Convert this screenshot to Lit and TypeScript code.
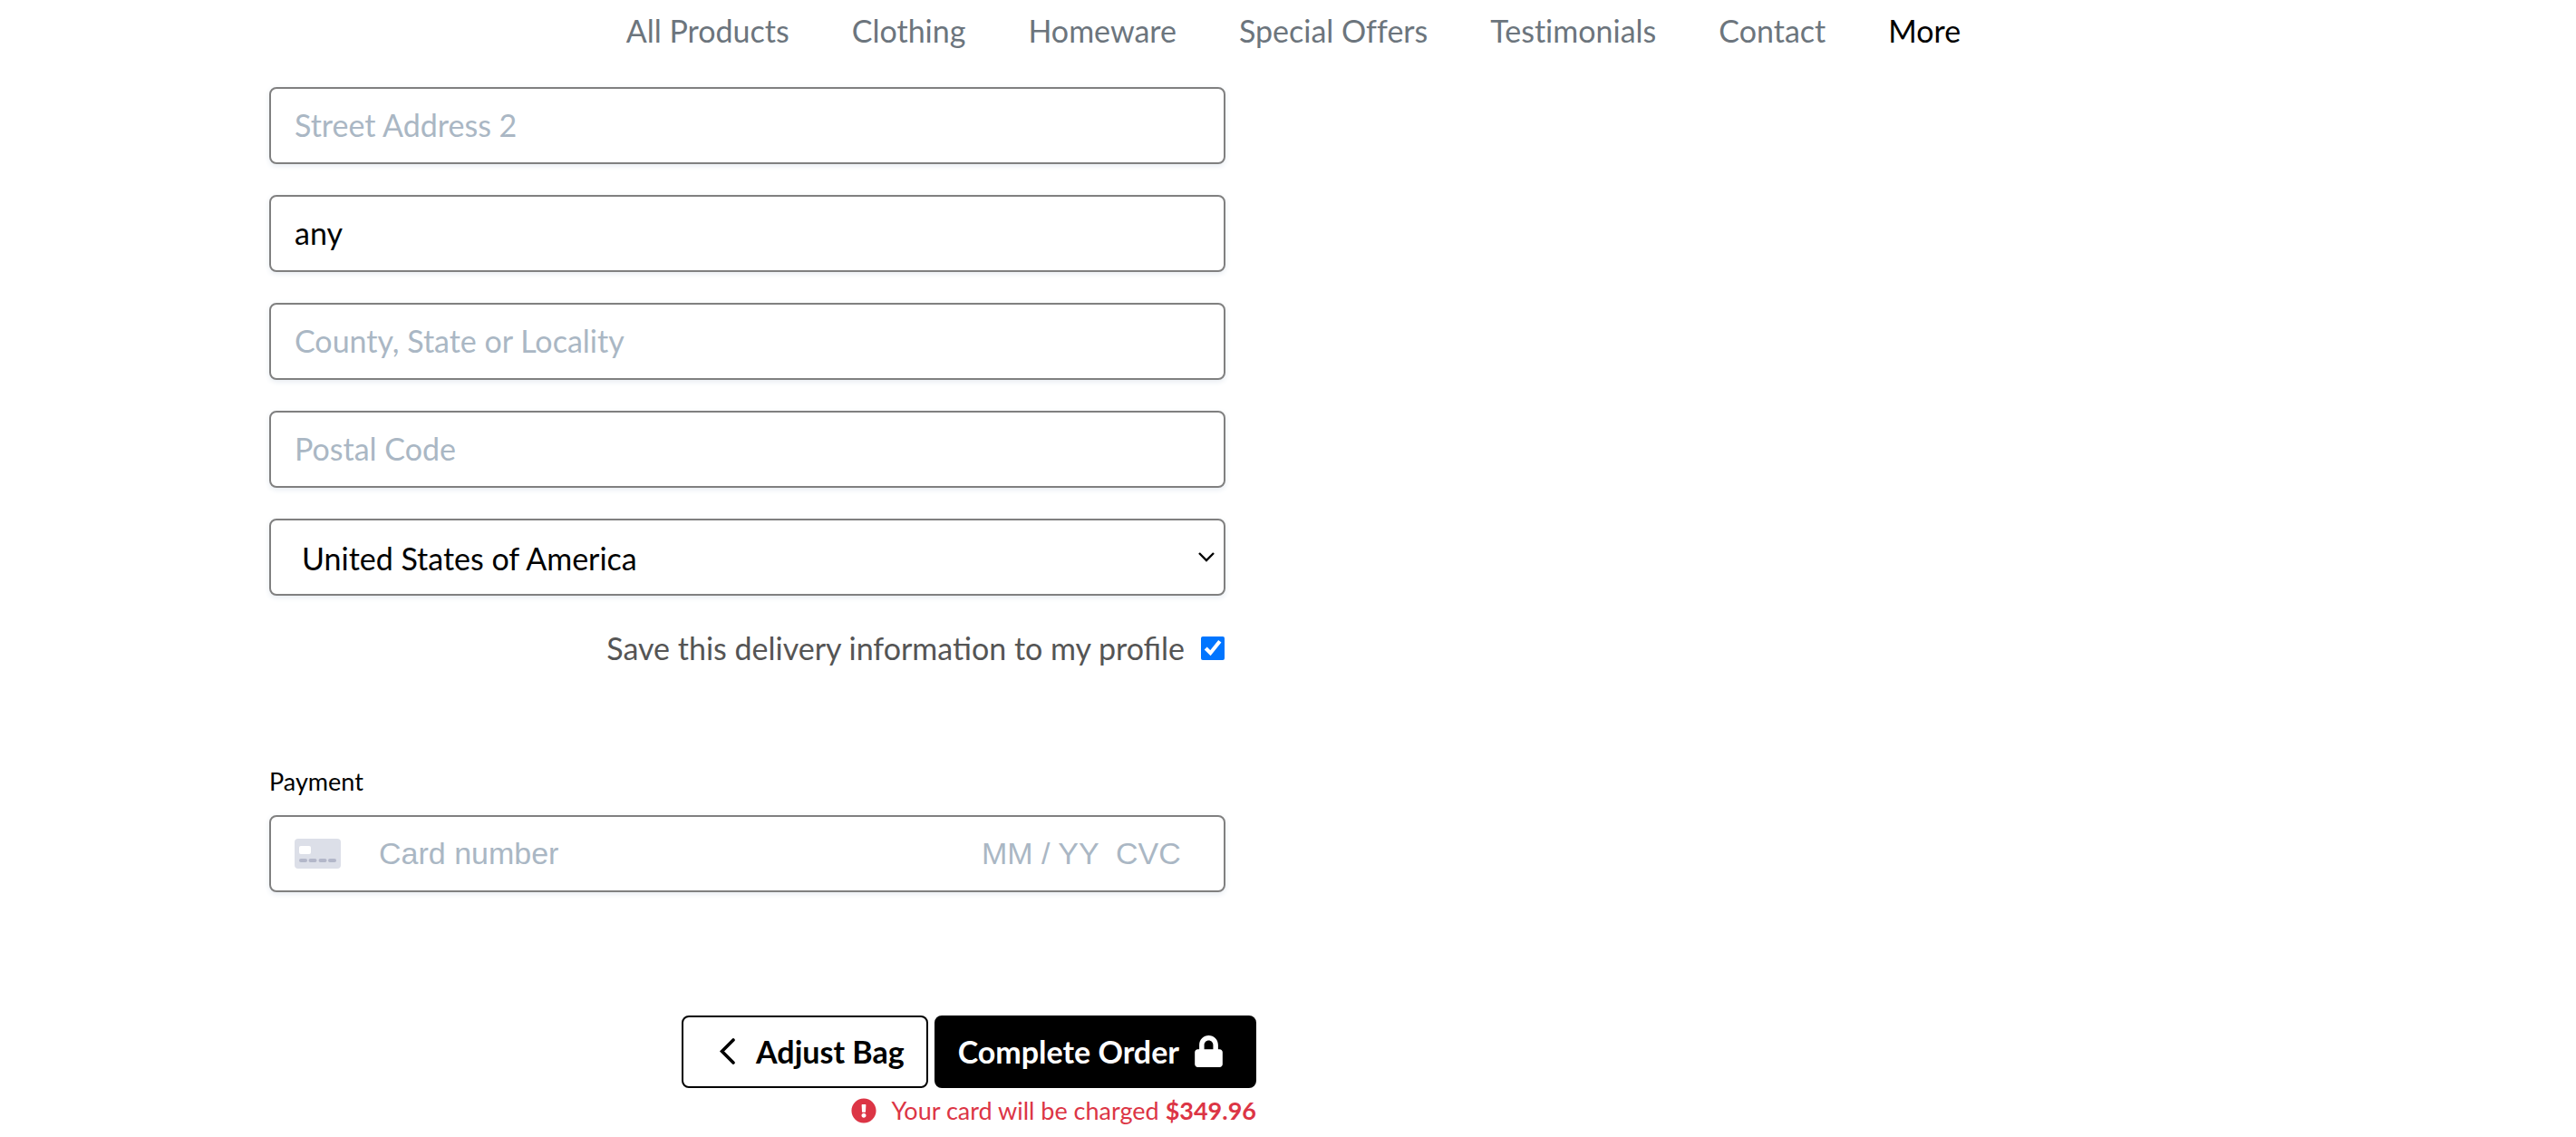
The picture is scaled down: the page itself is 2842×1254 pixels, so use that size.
import { LitElement, html, css } from "lit";
import { customElement } from "lit/decorators.js";

const NAV_LINKS = [
  "All Products",
  "Clothing",
  "Homeware",
  "Special Offers",
  "Testimonials",
  "Contact",
];

@customElement("site-nav")
class SiteNav extends LitElement {
  static styles = css`
    :host {
      display: block;
    }
    .links {
      display: flex;
      justify-content: center;
      flex-wrap: wrap;
      gap: 0 69px;
      padding: 13px 0 15px 12px;
      line-height: 42px;
      font-variant-ligatures: no-common-ligatures;
    }
    .link {
      color: #6c757d;
      text-decoration: none;
    }
    .link.active {
      color: #000;
    }
  `;

  render() {
    return html`
      <nav class="links" aria-label="Main">
        ${NAV_LINKS.map((name) => html`<a class="link" href="#">${name}</a>`)}
        <a class="link active" href="#">More</a>
      </nav>
    `;
  }
}

@customElement("checkout-form")
class CheckoutForm extends LitElement {
  static styles = css`
    :host {
      display: block;
    }
    * {
      box-sizing: border-box;
    }
    input,
    select,
    button {
      font: inherit;
      margin: 0;
    }
    .form {
      display: flex;
      flex-direction: column;
    }
    .fields {
      display: flex;
      flex-direction: column;
      gap: 34px;
      padding-right: 34px;
    }
    .control {
      width: 100%;
      height: 85px;
      padding: 0 26px 2px;
      border: 2px solid #808080;
      border-radius: 8px;
      background: #fff;
      box-shadow: 0 2px 6px #e6ebf1;
      color: #000;
      outline: none;
    }
    ::placeholder {
      color: #aab7c4;
      opacity: 1;
    }
    .picker {
      display: grid;
      align-items: center;
    }
    .picker > * {
      grid-area: 1 / 1;
    }
    .select {
      appearance: none;
      padding: 2px 60px 0 34px;
    }
    .arrow {
      justify-self: end;
      width: 20px;
      height: 12px;
      margin: 0 11px 2px 0;
      pointer-events: none;
    }
    .save {
      display: flex;
      justify-content: flex-end;
      align-items: center;
      gap: 18px;
      padding: 37px 35px 0 0;
      line-height: 42px;
      color: #555;
    }
    .tick {
      width: 26px;
      height: 26px;
    }
    .payment {
      display: flex;
      flex-direction: column;
      padding: 107px 34px 0 0;
    }
    .legend {
      padding-bottom: 18px;
      font-size: 27px;
      line-height: 38px;
    }
    .card {
      display: flex;
      align-items: center;
      padding-bottom: 0;
      font-family: "Liberation Sans", Arial, sans-serif;
    }
    .card-icon {
      flex: none;
      width: 51px;
      height: 33px;
      margin-right: 42px;
    }
    .card-input {
      min-width: 0;
      padding: 0;
      border: 0;
      background: none;
      outline: none;
    }
    .number {
      flex: 1;
    }
    .expiry {
      width: 148px;
    }
    .cvc {
      width: 93px;
    }
    .actions {
      display: flex;
      justify-content: flex-end;
      gap: 7px;
      padding-top: 136px;
    }
    .button {
      display: flex;
      align-items: center;
      height: 80px;
      padding: 0 24px 2px;
      border: 2px solid #000;
      border-radius: 8px;
      background: #fff;
      color: #000;
      font-weight: 700;
      text-decoration: none;
    }
    .button.primary {
      background: #000;
      color: #fff;
      padding-right: 35px;
    }
    .chevron {
      width: 17px;
      height: 29px;
      margin: 0 23px 0 16px;
    }
    .lock {
      width: 31px;
      height: 35px;
      margin-left: 17px;
    }
    .notice {
      display: flex;
      justify-content: flex-end;
      align-items: center;
      margin: 0;
      padding-top: 6px;
      font-size: 27px;
      line-height: 38px;
      color: #dc3545;
    }
    .alert {
      width: 28px;
      height: 28px;
      margin-right: 16px;
    }
  `;

  render() {
    return html`
      <form class="form" @submit=${(e: Event) => e.preventDefault()}>
        <div class="fields">
          <input class="control" aria-label="Street Address 2" placeholder="Street Address 2" />
          <input class="control" aria-label="Town or City" value="any" />
          <input
            class="control"
            aria-label="County, State or Locality"
            placeholder="County, State or Locality"
          />
          <input class="control" aria-label="Postal Code" placeholder="Postal Code" />
          <div class="picker">
            <select class="control select" aria-label="Country">
              <option>United States of America</option>
            </select>
            <svg class="arrow" viewBox="0 0 20 12" aria-hidden="true">
              <path d="M2 2l8 8 8-8" fill="none" stroke="#000" stroke-width="2.4" />
            </svg>
          </div>
        </div>

        <div class="save">
          <label for="save-info">Save this delivery information to my profile</label>
          <input class="tick" id="save-info" type="checkbox" checked />
        </div>

        <div class="payment" role="group" aria-labelledby="payment-title">
          <div class="legend" id="payment-title">Payment</div>
          <div class="control card">
            <svg class="card-icon" viewBox="0 0 51 33" aria-hidden="true">
              <rect width="51" height="33" rx="4" fill="#dcdfe8" />
              <rect x="5" y="8" width="13" height="9" rx="2" fill="#fff" />
              <path
                d="M7 24h5M17.500 24h5M28.500 24h5M39 24h5"
                stroke="#b3b7c9"
                stroke-width="4"
                stroke-linecap="round"
              />
            </svg>
            <input class="card-input number" aria-label="Card number" placeholder="Card number" />
            <input class="card-input expiry" aria-label="Expiry date" placeholder="MM / YY" />
            <input class="card-input cvc" aria-label="Security code" placeholder="CVC" />
          </div>
        </div>

        <div class="actions">
          <a class="button" href="#">
            <svg class="chevron" viewBox="0 0 17 29" aria-hidden="true">
              <path
                d="M15 2L2.500 14.500L15 27"
                fill="none"
                stroke="#000"
                stroke-width="3.600"
                stroke-linecap="round"
              />
            </svg>
            <span>Adjust Bag</span>
          </a>
          <button class="button primary" type="submit">
            <span>Complete Order</span>
            <svg class="lock" viewBox="0 0 448 512" aria-hidden="true">
              <path
                fill="#fff"
                d="M400 224h-24v-72C376 68.200 307.800 0 224 0S72 68.200 72 152v72H48c-26.500 0-48 21.500-48 48v192c0 26.500 21.500 48 48 48h352c26.500 0 48-21.500 48-48V272c0-26.500-21.500-48-48-48zm-104 0H152v-72c0-39.700 32.300-72 72-72s72 32.300 72 72v72z"
              />
            </svg>
          </button>
        </div>

        <p class="notice">
          <svg class="alert" viewBox="0 0 512 512" aria-hidden="true">
            <path
              fill="#dc3545"
              d="M504 256c0 137-111 248-248 248S8 393 8 256C8 119.100 119 8 256 8s248 111.100 248 248zm-248 50c-25.400 0-46 20.600-46 46s20.600 46 46 46 46-20.600 46-46-20.600-46-46-46zm-43.700-165.300l7.400 136c.3 6.400 5.600 11.300 12 11.300h48.500c6.400 0 11.600-5 12-11.300l7.400-136c.4-6.900-5.100-12.700-12-12.700h-63.400c-6.900 0-12.300 5.800-11.900 12.700z"
            />
          </svg>
          <span>Your card will be charged <strong>$349.96</strong></span>
        </p>
      </form>
    `;
  }
}

@customElement("app-root")
class AppRoot extends LitElement {
  static styles = css`
    :host {
      display: block;
      background: #fff;
      color: #000;
      font-family: Lato, "Liberation Sans", sans-serif;
      font-size: 34px;
    }
    .page {
      box-sizing: border-box;
      display: grid;
      grid-template-columns: minmax(0, 1fr) minmax(0, 1fr);
      max-width: 2280px;
      margin: 0 auto;
      padding: 26px 16px 0;
    }
    .column {
      padding-right: 35px;
    }
  `;

  render() {
    return html`
      <site-nav></site-nav>
      <main class="page">
        <div class="column">
          <checkout-form></checkout-form>
        </div>
      </main>
    `;
  }
}
